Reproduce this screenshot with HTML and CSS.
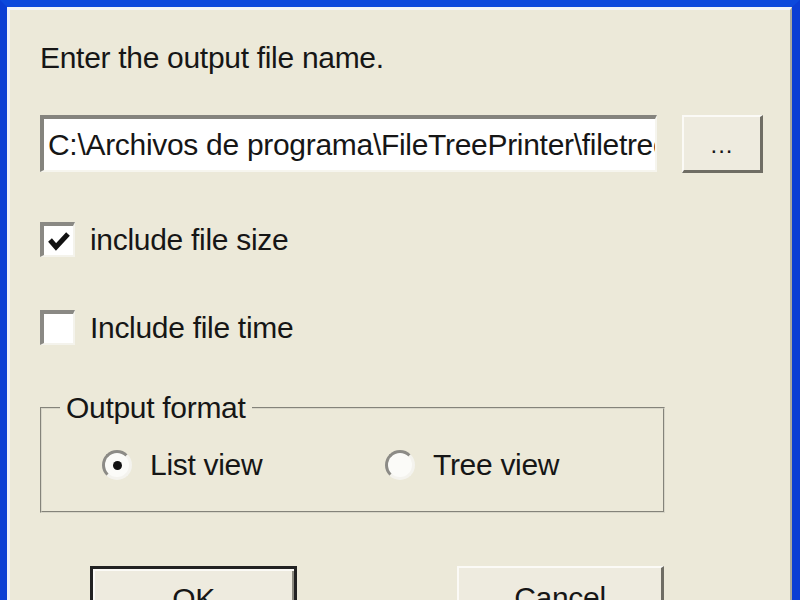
FILE: index.html
```html
<!DOCTYPE html>
<html lang="en">

<head>
    <meta charset="UTF-8">
    <meta name="viewport" content="width=device-width, initial-scale=1.0">
    <title>FileTreePrinter - Output</title>
    <link rel="stylesheet" href="styles.css">
</head>

<body>
    <div class="window">
        <div class="frame">
            <p class="prompt">Enter the output file name.</p>

            <div class="file-row">
                <div class="textbox">C:\Archivos de programa\FileTreePrinter\filetree.txt</div>
                <div class="button browse">...</div>
            </div>

            <div class="check-row size-row">
                <span class="checkbox">
                    <svg width="24" height="22" viewBox="0 0 24 22">
                        <polyline points="3,10 9,17 21,4" fill="none" stroke="#111" stroke-width="5" />
                    </svg>
                </span>
                <span class="label">include file size</span>
            </div>

            <div class="check-row time-row">
                <span class="checkbox"></span>
                <span class="label">Include file time</span>
            </div>

            <fieldset class="group">
                <legend>Output format</legend>
                <div class="radio-row">
                    <div class="option first">
                        <span class="radio checked"></span>
                        <span class="label">List view</span>
                    </div>
                    <div class="option">
                        <span class="radio"></span>
                        <span class="label">Tree view</span>
                    </div>
                </div>
            </fieldset>

            <div class="actions">
                <div class="button default">OK</div>
                <div class="button">Cancel</div>
            </div>
        </div>
    </div>
</body>

</html>
```

FILE: styles.css
```css
body {
    margin: 0;
    padding: 0;
    font-family: "Liberation Sans", Arial, sans-serif;
    font-size: 30px;
    letter-spacing: -0.3px;
    color: #161616;
}

.window {
    height: 600px;
    box-sizing: border-box;
    border-top: 7px solid #0c48dc;
    border-left: 7px solid #0a3dd4;
    border-right: 8px solid #0a3dd4;
    overflow: hidden;
}

.frame {
    height: 100%;
    box-sizing: border-box;
    background-color: #ece9d9;
    border-top: 3px solid #f2f3f7;
    border-left: 3px solid #eef0f8;
    border-right: 2px solid #a9a79c;
    padding: 0 0 0 30px;
}

.prompt {
    margin: 0;
    padding-top: 30px;
    line-height: 36px;
}

/* file name + browse button */
.file-row {
    display: flex;
    gap: 25px;
    margin-top: 39px;
}

.textbox {
    width: 607px;
    height: 51px;
    background-color: #fff;
    border-top: 4px solid #85847e;
    border-left: 4px solid #85847e;
    border-right: 2px solid #f6f5ee;
    border-bottom: 2px solid #f6f5ee;
    padding-left: 4px;
    line-height: 52px;
    white-space: nowrap;
    overflow: hidden;
}

.button {
    box-sizing: border-box;
    background-color: #eeebdf;
    border-top: 2px solid #fbfaf6;
    border-left: 2px solid #fbfaf6;
    border-right: 3px solid #6f6d64;
    border-bottom: 3px solid #6f6d64;
    text-align: center;
}

.browse {
    width: 81px;
    height: 58px;
    line-height: 56px;
    font-size: 24px;
    letter-spacing: 1px;
}

/* checkboxes */
.check-row {
    display: flex;
    align-items: center;
    gap: 15px;
    height: 35px;
    line-height: 35px;
}

.size-row {
    margin-top: 49px;
}

.time-row {
    margin-top: 53px;
}

.checkbox {
    box-sizing: border-box;
    width: 35px;
    height: 35px;
    background-color: #fff;
    border-top: 4px solid #8a8984;
    border-left: 4px solid #8a8984;
    border-right: 2px solid #f4f3ec;
    border-bottom: 2px solid #f4f3ec;
    display: flex;
    align-items: center;
    justify-content: center;
}

/* output format group */
.group {
    width: 603px;
    margin: 48px 0 0 0;
    padding: 0 0 31px 18px;
    border: 2px groove #d8d6c8;
}

.group legend {
    padding: 0 6px;
    line-height: 30px;
}

.radio-row {
    display: flex;
    margin: 27px 0 0 42px;
}

.option {
    display: flex;
    align-items: center;
    gap: 18px;
    height: 30px;
    line-height: 32px;
}

.option.first {
    width: 283px;
}

.radio {
    box-sizing: border-box;
    width: 30px;
    height: 30px;
    border-radius: 50%;
    background-color: #fbfbf8;
    border: 3px solid #f4f3ee;
    border-top-color: #8c8b86;
    border-left-color: #8c8b86;
    display: flex;
    align-items: center;
    justify-content: center;
}

.radio.checked::after {
    content: "";
    width: 9px;
    height: 9px;
    border-radius: 50%;
    background-color: #111;
}

/* OK / Cancel */
.actions {
    display: flex;
    gap: 160px;
    margin: 53px 0 0 50px;
}

.actions .button {
    width: 207px;
    height: 60px;
    line-height: 52px;
    padding-top: 4px;
}

.actions .default {
    border: 3px solid #222;
    box-shadow: inset 2px 2px 0 #fbfaf6, inset -2px -2px 0 #8d8b80;
}
```
